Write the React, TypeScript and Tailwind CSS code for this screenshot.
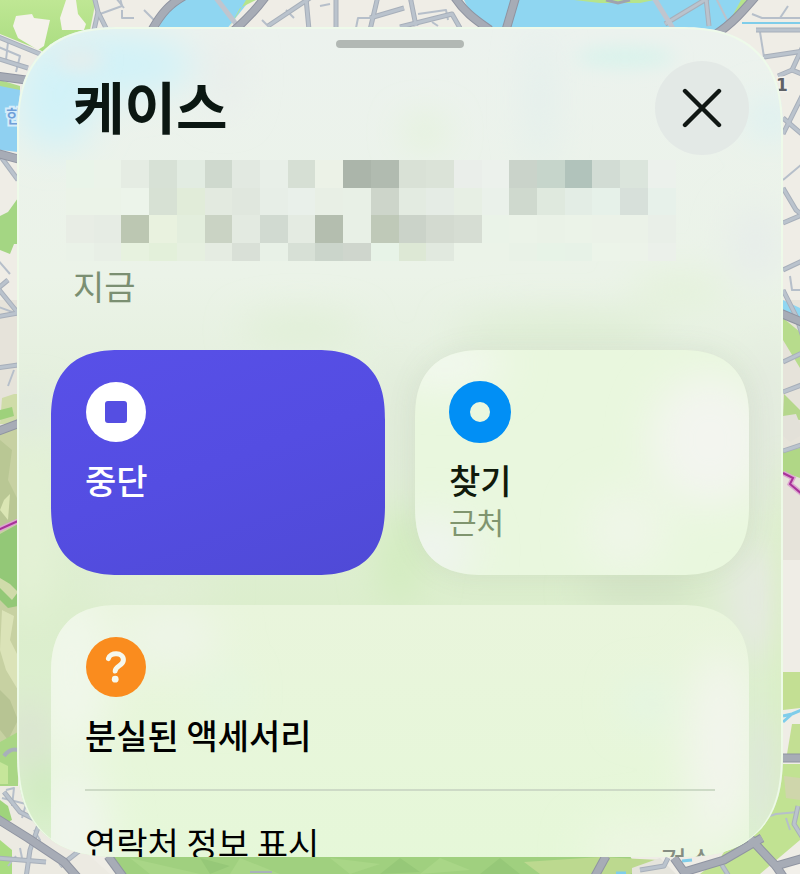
import type { ReactNode } from 'react';

const MOSAIC: string[][] = [
  ['#e9f4e9', '#ebf3e9', '#e5ece3', '#d7e1d6', '#e2ece2', '#cfd9ce', '#e2e9e1', '#e8efe8', '#d6dfd4', '#ecf2e7', '#abb5aa', '#b1bbb0', '#d9e1d6', '#dbe3d8', '#eaeeea', '#ecf1ec', '#cad3ca', '#c6d5cb', '#b1c3bb', '#d2dcd4', '#dbe5dc', '#ecf1ec'],
  ['#ebf3e8', '#ebf3e8', '#ecf4ea', '#d7e1d4', '#e1ecd9', '#e3eae0', '#e0e7de', '#e7eee7', '#e9f0ea', '#e8efe5', '#e8f0e6', '#cdd5ca', '#e3ebe1', '#e5ece5', '#e7efe4', '#eaf1ea', '#cfd9ce', '#dfe9de', '#e3ede5', '#e6f1e9', '#d7e0da', '#e7f1ea'],
  ['#e8ede5', '#e6ece4', '#bcc7b2', '#e9f2df', '#e3eedd', '#cad3c4', '#e3eae1', '#d1dad1', '#e4ebe2', '#b4beaf', '#e8f0e6', '#bfc9b8', '#cbd3c9', '#d3dad0', '#d6ddd3', '#eaf3e8', '#ebf3e8', '#eaf2e7', '#ebf3e8', '#ebf2e8', '#ebf2e8', '#e9efe8'],
  ['#eaf2e8', '#e8efe6', '#e7f2df', '#e3f0da', '#e6f0e0', '#e5ece2', '#d9e0d7', '#e8f1e7', '#d7e0d6', '#cbd5cb', '#cfd6cd', '#e7f3e7', '#dde8d5', '#e1e9df', '#ebf3e8', '#ebf3e8', '#e9f2e7', '#e7f3e7', '#e7f2e7', '#ecf4e9', '#ecf3e9', '#ebf0ea'],
];

function MosaicAddress() {
  return (
    <svg viewBox="0 0 24 3.65" className="block w-full" shapeRendering="crispEdges" aria-hidden="true">
      {MOSAIC.map((row, y) =>
        row.map((fill, x) => <rect key={`${x}-${y}`} x={x} y={y} width="1" height="1" fill={fill} />),
      )}
    </svg>
  );
}

const HIGHWAYS = [
  'M152 30 C162 12 170 4 184 -4',
  'M230 34 C244 22 256 10 266 -4',
  'M454 -4 C464 12 476 20 490 30',
  'M716 34 C732 24 744 10 756 -4',
  'M-4 76 L26 80',
  'M-4 153 L22 160',
  'M-4 432 L20 423',
  'M780 313 L804 323',
  'M780 758 L804 758',
  'M-4 818 L28 838 L64 862 L78 878',
  'M674 858 L684 872 L724 860 L762 838',
  'M746 834 L776 866 L804 858',
  'M776 866 L784 878',
  'M108 856 L124 878',
  'M606 856 L594 878',
];

const STREETS = [
  'M94 -4 L98 12 L106 28',
  'M98 12 L94 30',
  'M410 -4 L416 26',
  'M400 27 L452 14 L460 28',
  'M665 24 L708 -2',
  'M268 26 L310 -2',
  'M306 -2 L309 30',
  'M336 -2 L336 30',
  'M378 -4 L370 30',
  'M370 18 L404 8',
  'M706 -2 L709 26',
  'M756 30 L804 30',
  'M764 57 L804 51',
  'M778 76 L792 70 L804 44',
  'M792 70 L804 75',
  'M783 134 L804 92',
  'M783 118 L804 136',
  'M783 188 L796 210 L804 216',
  'M783 223 L804 214',
  'M783 270 L804 260',
  'M783 290 L796 316 L804 340',
  'M783 362 L804 352',
  'M783 392 L804 384',
  'M783 451 L804 444',
  'M-4 36 L40 54',
  'M-4 58 L28 68',
  'M-4 286 L18 313 L-4 317',
  'M-4 290 L8 280',
  'M-4 368 L18 365',
  'M-4 150 L18 180',
  'M4 792 L20 812 L40 822 L30 850 L26 878',
  'M-4 858 L46 862',
  'M60 866 L88 844',
  'M798 806 L794 824 L804 840',
  'M640 870 L664 866 L668 858',
  'M720 862 L730 878',
];

const LANES = [
  'M100 14 L122 6 L120 -2',
  'M122 10 L122 18 L134 18',
  'M116 -2 L124 8',
  'M144 10 L154 20',
  'M418 14 L446 10 L448 20',
  'M432 22 L438 26',
  'M286 10 L294 18',
  'M262 20 L270 28',
  'M356 28 L358 18 L370 18',
  'M320 6 L330 4',
  'M760 32 L764 57',
  'M752 14 L762 18 L800 18',
  'M788 6 L780 18',
  'M-4 46 L20 56 L16 72',
  'M8 42 L6 60',
  'M18 314 L-4 306',
  'M10 274 L-4 258',
  'M14 370 L8 386',
  'M783 180 L802 164',
  'M790 276 L792 290 L802 290',
  'M6 790 L14 788 L12 806',
  'M2 798 L26 804 L22 818',
  'M34 846 L40 840 L34 830',
  'M20 848 L22 858',
  'M8 866 L16 856',
  'M770 816 L776 814 L798 812',
  'M786 818 L790 830',
];

function CityMap() {
  return (
    <svg
      className="absolute inset-0 h-full w-full"
      viewBox="0 0 800 874"
      preserveAspectRatio="xMidYMid slice"
      aria-hidden="true"
    >
      <defs>
        <linearGradient id="map-park" x1="0" y1="0" x2="0" y2="1">
          <stop offset="0" stopColor="#bfe794" />
          <stop offset="1" stopColor="#a9dc80" />
        </linearGradient>
      </defs>
      <rect width="800" height="874" fill="#efede6" />
      <rect y="300" width="800" height="260" fill="#e6e3da" />

      <path d="M0 0 H96 L90 30 L46 54 L40 50 L0 34Z" fill="url(#map-park)" />
      <path d="M16 16 L32 14 L34 18 L50 20 L44 46 L38 50 L18 38 L13 26Z" fill="#f4f2eb" />
      <path d="M66 0 H76 L78 14 L86 24 L84 30 H62 L60 18Z" fill="#f4f2eb" />
      <path d="M182 0 H250 L226 30 H158 Q166 8 182 0Z" fill="#8fd6f1" />
      <path d="M240 8 L256 0 H246 L228 30Z" fill="#b6e48c" />
      <path d="M464 0 H752 L724 30 H492 L470 12Z" fill="#8fd6f1" />
      <path d="M574 0 H654 L640 3 H600Z" fill="#b6e48c" />
      <path d="M606 0 L618 3 L630 0" fill="none" stroke="#9fa3af" strokeWidth="3" />
      <path d="M741 0 H752 L728 24Z" fill="#b6e48c" />
      <path d="M742 23 H800" stroke="#7fcdea" strokeWidth="2" />
      <path d="M0 84 L20 88 L18 152 L0 150Z" fill="#8fd0f1" />
      <path d="M0 80 L20 86 V90 L0 86Z" fill="#b0dc8a" />
      <text
        x="6"
        y="123"
        fontSize="18"
        fontWeight="500"
        fill="#6f9fd8"
        stroke="#d5ecfa"
        strokeWidth="4"
        paintOrder="stroke"
        fontFamily="'Noto Sans CJK KR', sans-serif"
      >
        한
      </text>

      <path d="M18 198 L8 212 L0 216 V250 L10 254 L14 244 H18Z" fill="#a4d683" />
      <path d="M2 398 L14 394 H18 V424 H0Z" fill="#cfdca8" />
      <path d="M0 410 L12 407 L14 416 L0 420Z" fill="#9ed17b" />
      <path d="M0 432 L18 426 V750 H0Z" fill="#c7d1a2" />
      <path d="M0 440 L12 450 L8 480 L18 500 V520 L0 530Z" fill="#b9c794" />
      <path d="M4 500 L10 494 L8 520 L0 510Z" fill="#dbe6b4" />
      <path d="M0 534 L18 524 V606 L8 608 L0 600Z" fill="#93c877" />
      <path d="M0 578 L10 584 L18 592 L12 600 L0 588Z" fill="#d0dbaa" />
      <path d="M2 610 L14 616 L10 640 L18 656 V690 L6 670 L0 650Z" fill="#dbe3b8" />
      <path d="M0 690 L10 700 L18 720 L8 740 L0 730Z" fill="#b7c493" />
      <path d="M0 742 L18 732 V786 H0Z" fill="#a9d684" />
      <path d="M0 762 L8 766 V784 H0Z" fill="#c6e69a" />
      <path d="M4 756 Q10 748 18 750" fill="none" stroke="#a8b0ba" strokeWidth="4" />

      <path d="M0 786 L30 788 L60 830 L110 874 H0Z" fill="#eceae2" />
      <path d="M0 800 L8 806 L12 820 L0 826Z" fill="#9fd47c" />
      <path d="M0 840 L12 850 V874 H0Z" fill="#a9dc80" />
      <path d="M110 856 H630 L640 874 H120Z" fill="#a0d07f" />
      <path d="M130 858 L200 874 H150Z M240 858 L280 874 H230Z M330 858 L380 864 L350 874Z M440 858 L470 870 L420 874Z" fill="#a9d687" />
      <path d="M200 858 L230 866 L210 874Z M400 858 L420 872 L380 874Z M500 858 L520 874 H480Z" fill="#96c878" />
      <path d="M524 862 L600 857 L660 860 L630 874 H540Z" fill="#bcd98f" />
      <path d="M250 872 H272" stroke="#a8b0ba" strokeWidth="2" />

      <path d="M783 318 L800 332 V368 L783 340Z" fill="#b7dc8c" />
      <path d="M783 300 L800 308 V322 L783 312Z" fill="#8fd6f1" />
      <path d="M784 394 L800 410 V420 L783 418Z" fill="#b5d78c" />
      <path d="M783 450 L800 448 V478 L783 472Z" fill="#b0d786" />
      <path d="M783 416 L796 414 L800 424 V436 L790 442 L783 436Z" fill="#e3e1d9" />
      <path d="M783 672 H800 V708 L783 710Z" fill="#c3df93" />
      <path d="M792 724 H800 V754 H787Z" fill="#c3df93" />
      <path d="M783 716 L792 714 L804 709 M783 722 L792 714" fill="none" stroke="#7fcdea" strokeWidth="3" />
      <path d="M783 764 H800 V840 L760 874 H700 L720 858Z" fill="#c1e292" />
      <path d="M784 776 L800 778 V800 L786 798Z" fill="#cfd6ab" />
      <path d="M784 874 L800 856 V874Z" fill="#f2f0ea" />
      <path d="M632 868 L660 858 L676 874 H632Z" fill="#e5e4dc" />
      <path d="M682 861 L692 860 M616 873 H626" stroke="#7fcdea" strokeWidth="3" />

      <g fill="none" stroke="#b6bfca" strokeWidth="2" strokeLinejoin="round">
        {LANES.map((d) => (
          <path key={d} d={d} />
        ))}
      </g>
      <g fill="none" stroke="#a7afba" strokeWidth="5" strokeLinejoin="round">
        {STREETS.map((d) => (
          <path key={d} d={d} />
        ))}
      </g>
      <g fill="none" stroke="#bac3cd" strokeWidth="3" strokeLinejoin="round">
        {STREETS.map((d) => (
          <path key={d} d={d} />
        ))}
      </g>
      <g fill="none" stroke="#c0c5ce" strokeWidth="5">
        <path d="M216 -2 L236 24" />
        <path d="M654 -2 L674 30" />
      </g>
      <path d="M716 -2 L728 22" stroke="#bdc2cb" strokeWidth="2" />
      <g fill="none" stroke="#8f94a1" strokeWidth="9" strokeLinejoin="round">
        {HIGHWAYS.map((d) => (
          <path key={d} d={d} />
        ))}
        <path d="M516 -4 L506 30" />
      </g>
      <g fill="none" stroke="#a7acb6" strokeWidth="7" strokeLinejoin="round">
        {HIGHWAYS.map((d) => (
          <path key={d} d={d} />
        ))}
        <path d="M516 -4 L506 30" />
      </g>

      <g fill="none">
        <path d="M-2 530 L18 521 M783 473 L793 478 L790 484 L802 494" stroke="#dca6cf" strokeWidth="5" />
        <path d="M-2 530 L18 521 M783 473 L793 478 L790 484 L802 494" stroke="#a8329a" strokeWidth="2" />
      </g>
      <text
        x="776"
        y="91"
        fontSize="17"
        fontWeight="700"
        fill="#5f6166"
        stroke="#f4f2ec"
        strokeWidth="3"
        paintOrder="stroke"
        fontFamily="'DejaVu Sans', sans-serif"
      >
        1
      </text>
    </svg>
  );
}

function GlassTint() {
  return (
    <svg
      className="absolute inset-0 h-full w-full"
      viewBox="17 27 766 830"
      preserveAspectRatio="none"
      aria-hidden="true"
    >
      <defs>
        <linearGradient id="glass-base" x1="0" y1="0" x2="0" y2="1">
          <stop offset="0" stopColor="#ecf2ee" />
          <stop offset="0.3" stopColor="#ebf3e8" />
          <stop offset="0.42" stopColor="#e5f0de" />
          <stop offset="0.7" stopColor="#dceecd" />
          <stop offset="1" stopColor="#dcf0d0" />
        </linearGradient>
        <filter id="glass-blur" x="-50%" y="-50%" width="200%" height="200%">
          <feGaussianBlur stdDeviation="18" />
        </filter>
        <filter id="glass-soft" x="-50%" y="-50%" width="200%" height="200%">
          <feGaussianBlur stdDeviation="9" />
        </filter>
      </defs>
      <rect x="17" y="27" width="766" height="830" fill="url(#glass-base)" />
      <g filter="url(#glass-blur)">
        <ellipse cx="110" cy="65" rx="85" ry="32" fill="#d2f2f8" />
        <ellipse cx="56" cy="100" rx="40" ry="50" fill="#d2f2f8" />
        <ellipse cx="225" cy="75" rx="16" ry="40" fill="#e8edeb" />
        <ellipse cx="425" cy="132" rx="20" ry="12" fill="#dff2d0" />
        <ellipse cx="540" cy="100" rx="10" ry="70" fill="#e0eeec" />
        <ellipse cx="770" cy="118" rx="22" ry="18" fill="#d8f1f3" />
        <ellipse cx="755" cy="245" rx="26" ry="40" fill="#e7edea" />
        <ellipse cx="680" cy="290" rx="50" ry="14" fill="#e3f2d8" />
        <ellipse cx="560" cy="330" rx="110" ry="14" fill="#dcedd0" />
        <ellipse cx="300" cy="330" rx="60" ry="14" fill="#dfefd4" />
        <ellipse cx="30" cy="410" rx="20" ry="16" fill="#dfe8e3" />
        <ellipse cx="30" cy="530" rx="24" ry="90" fill="#e4f2d6" />
        <ellipse cx="400" cy="430" rx="14" ry="70" fill="#dfe9d9" />
        <ellipse cx="400" cy="560" rx="24" ry="50" fill="#d3ecc0" />
        <ellipse cx="766" cy="430" rx="18" ry="90" fill="#e3e9e0" />
        <ellipse cx="755" cy="600" rx="30" ry="60" fill="#e5eae0" />
        <ellipse cx="640" cy="590" rx="60" ry="12" fill="#cfdfc2" />
        <ellipse cx="150" cy="590" rx="70" ry="12" fill="#e4efda" />
        <ellipse cx="30" cy="735" rx="22" ry="36" fill="#dbe3d2" />
        <ellipse cx="45" cy="790" rx="16" ry="30" fill="#c9eab8" />
        <ellipse cx="770" cy="770" rx="18" ry="60" fill="#dee5dc" />
      </g>
      <g filter="url(#glass-soft)">
        <ellipse cx="80" cy="60" rx="24" ry="12" fill="#e4eeed" />
        <ellipse cx="625" cy="57" rx="50" ry="10" fill="#d8f3ec" />
        <ellipse cx="780" cy="690" rx="4" ry="240" fill="#d9f0bd" />
      </g>
    </svg>
  );
}

function CardTint() {
  return (
    <svg className="absolute inset-0 h-full w-full" viewBox="0 0 334 225" preserveAspectRatio="none" aria-hidden="true">
      <defs>
        <filter id="find-card-blur" x="-60%" y="-60%" width="220%" height="220%">
          <feGaussianBlur stdDeviation="20" />
        </filter>
      </defs>
      <g filter="url(#find-card-blur)">
        <ellipse cx="30" cy="14" rx="60" ry="24" fill="#f3f8f0" />
        <ellipse cx="16" cy="200" rx="44" ry="36" fill="#eff4ee" />
        <ellipse cx="295" cy="90" rx="60" ry="66" fill="#f3f5ef" />
        <ellipse cx="210" cy="180" rx="40" ry="40" fill="#eff6e8" />
      </g>
    </svg>
  );
}

function StopIcon() {
  return (
    <svg viewBox="0 0 62 62" className="size-[62px]" aria-hidden="true">
      <circle cx="31" cy="31" r="30" fill="#fff" />
      <rect x="20" y="20" width="22" height="22" rx="3" fill="#554ee2" />
    </svg>
  );
}

function FindIcon() {
  return (
    <svg viewBox="0 0 62 62" className="size-[62px]" aria-hidden="true">
      <circle cx="31" cy="31" r="20.5" fill="none" stroke="#018ff5" strokeWidth="21" />
    </svg>
  );
}

function QuestionIcon() {
  return (
    <svg viewBox="0 0 62 62" className="size-[62px]" aria-hidden="true">
      <circle cx="31" cy="31" r="30" fill="#fa8c1e" />
      <path
        d="M23.4 22.6 C24.8 16 38.4 15.8 38.4 24 C38.4 30 30.4 29.4 30.2 35"
        fill="none"
        stroke="#f6f8ee"
        strokeWidth="5"
        strokeLinecap="round"
      />
      <circle cx="30.2" cy="43.2" r="3.4" fill="#f6f8ee" />
    </svg>
  );
}

const SMOOTH = '[corner-shape:superellipse(1.34)]';

function ActionCard({ tone, icon, title, note }: { tone: string; icon: ReactNode; title: string; note?: string }) {
  return (
    <button
      type="button"
      className={`relative flex min-h-[225px] flex-col items-start overflow-hidden rounded-[70px] px-[34px] pt-[31px] text-left ${SMOOTH} ${tone}`}
    >
      {note && <CardTint />}
      <span className="relative">{icon}</span>
      <span className="relative mt-4 text-[34px] leading-[42px] font-medium">{title}</span>
      {note && <span className="relative text-[30px] leading-[40px] text-[#80956f]">{note}</span>}
    </button>
  );
}

export default function App() {
  return (
    <main className="relative flex h-screen flex-col overflow-hidden px-[17px] pt-[27px] pb-[17px] font-['Noto_Sans_CJK_KR',sans-serif] text-black">
      <CityMap />
      <section
        aria-labelledby="item-name"
        className="relative min-h-0 flex-1 overflow-hidden rounded-[104px] [corner-shape:superellipse(1.34)]"
      >
        <GlassTint />
        <div className="relative flex flex-col pt-[13px]">
          <div className="h-2 w-32 self-center rounded-full bg-[#b2b8b4]" />

          <header className="mt-[13px] flex items-center justify-between pr-[34px] pl-[56px]">
            <h1 id="item-name" className="pb-[6px] text-[56px] leading-[80px] font-bold text-[#0b1712]">
              케이스
            </h1>
            <button
              type="button"
              aria-label="닫기"
              className="flex size-[94px] items-center justify-center rounded-full bg-[#e3e9e6]"
            >
              <svg viewBox="0 0 40 40" className="size-10" aria-hidden="true">
                <path d="M3 3 L37 37 M37 3 L3 37" stroke="#101714" strokeWidth="4.4" strokeLinecap="round" />
              </svg>
            </button>
          </header>

          <div className="mt-[5px] pr-[52px] pl-[49px]">
            <MosaicAddress />
          </div>
          <p className="mt-[3px] px-[56px] text-[34px] leading-[44px] text-[#7b8f72]">지금</p>

          <div className="mx-[34px] mt-[42px] grid grid-cols-2 gap-[30px]">
            <ActionCard
              tone="bg-linear-160 from-[#5850e8] via-[#544de2] to-[#4f4ad6] text-white"
              icon={<StopIcon />}
              title="중단"
            />
            <ActionCard
              tone="bg-[#e9f7de] text-[#111a0b] shadow-[0_0_30px_rgba(90,110,80,0.1)]"
              icon={<FindIcon />}
              title="찾기"
              note="근처"
            />
          </div>

          <section
            className={`relative mx-[34px] mt-[30px] overflow-hidden rounded-t-[70px] bg-linear-to-b from-[#e9f5dc] to-[#e5f8d8] px-[34px] pt-[31px] pb-10 ${SMOOTH}`}
          >
            <svg className="absolute inset-0 h-full w-full" viewBox="0 0 698 290" preserveAspectRatio="none" aria-hidden="true">
              <defs>
                <filter id="lost-card-blur" x="-60%" y="-60%" width="220%" height="220%">
                  <feGaussianBlur stdDeviation="20" />
                </filter>
              </defs>
              <g filter="url(#lost-card-blur)">
                <ellipse cx="20" cy="60" rx="40" ry="80" fill="#f0f7ea" />
                <ellipse cx="20" cy="210" rx="40" ry="60" fill="#f0f6ec" />
                <ellipse cx="120" cy="30" rx="50" ry="30" fill="#eef5e8" />
                <ellipse cx="175" cy="80" rx="12" ry="14" fill="#e0f5ea" />
                <ellipse cx="595" cy="90" rx="20" ry="16" fill="#e2f5ea" />
                <ellipse cx="670" cy="130" rx="36" ry="90" fill="#f2f5ec" />
                <ellipse cx="600" cy="225" rx="70" ry="24" fill="#eef6e4" />
              </g>
            </svg>
            <div className="relative">
              <QuestionIcon />
              <h2 className="mt-4 text-[34px] leading-[42px] font-medium">분실된 액세서리</h2>
              <hr className="mt-[33px] h-[2px] border-0 bg-[#cddac6]" />
              <button type="button" className="mt-[31px] flex w-full items-start justify-between text-left">
                <span className="text-[34px] leading-[42px]">연락처 정보 표시</span>
                <span className="pt-[18px] text-[30px] leading-[40px] text-[#858d82]">검수</span>
              </button>
            </div>
          </section>
        </div>
        <div className="pointer-events-none absolute inset-0 rounded-[104px] border-2 border-b-0 border-[#effbe9]/90 [corner-shape:superellipse(1.34)]" />
      </section>
    </main>
  );
}
